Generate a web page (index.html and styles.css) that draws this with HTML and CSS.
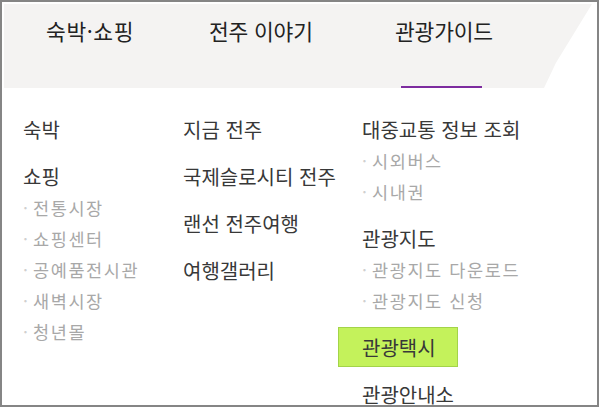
FILE: index.html
```html
<!DOCTYPE html>
<html lang="ko">
<head>
    <meta charset="UTF-8">
    <meta name="viewport" content="width=device-width, initial-scale=1.0">
    <title>관광가이드 - 전체메뉴</title>
    <link rel="stylesheet" href="styles.css">
</head>
<body>

<div class="frame">
    <!-- 상단 메뉴 -->
    <div class="gnb">
        <ul class="gnb-list">
            <li class="gnb-item first">숙박·쇼핑</li>
            <li class="gnb-item second">전주 이야기</li>
            <li class="gnb-item active">관광가이드</li>
        </ul>
    </div>

    <!-- 하위 메뉴 -->
    <div class="sub-menu">
        <ul class="dep2 col-1">
            <li><a href="#">숙박</a></li>
            <li>
                <a href="#">쇼핑</a>
                <ul class="dep3">
                    <li>전통시장</li>
                    <li>쇼핑센터</li>
                    <li>공예품전시관</li>
                    <li>새벽시장</li>
                    <li>청년몰</li>
                </ul>
            </li>
        </ul>

        <ul class="dep2 col-2">
            <li><a href="#">지금 전주</a></li>
            <li><a href="#">국제슬로시티 전주</a></li>
            <li><a href="#">랜선 전주여행</a></li>
            <li><a href="#">여행갤러리</a></li>
        </ul>

        <ul class="dep2 col-3">
            <li>
                <a href="#">대중교통 정보 조회</a>
                <ul class="dep3">
                    <li>시외버스</li>
                    <li>시내권</li>
                </ul>
            </li>
            <li>
                <a href="#">관광지도</a>
                <ul class="dep3">
                    <li>관광지도 다운로드</li>
                    <li>관광지도 신청</li>
                </ul>
            </li>
            <li><a href="#" class="highlight">관광택시</a></li>
            <li><a href="#">관광안내소</a></li>
        </ul>
    </div>
</div>

</body>
</html>
```

FILE: styles.css
```css
/* 전체 메뉴 */
body {
    margin: 0;
    padding: 0;
    background-color: #fff;
    font-family: "Noto Sans CJK KR", "Noto Sans", sans-serif;
}

ul {
    list-style: none;
    margin: 0;
    padding: 0;
}

a {
    text-decoration: none;
    color: inherit;
}

.frame {
    box-sizing: border-box;
    width: 599px;
    height: 407px;
    border: 2px solid #858585;
    padding: 2px 0 0 2px;
    overflow: hidden;
}

/* 상단 메뉴 */
.gnb {
    height: 84px;
    background-color: #f4f3f2;
    clip-path: polygon(0 0, 588px 0, 552px 70%, 540px 100%, 0 100%);
    box-sizing: border-box;
    padding: 12px 0 0 42px;
}

.gnb-list {
    display: flex;
    height: 100%;
}

.gnb-item {
    position: relative;
    font-size: 21.5px;
    line-height: 30px;
    color: #222;
    letter-spacing: -0.2px;
}

.gnb-item.first {
    width: 163px;
    letter-spacing: 0.6px;
}

.gnb-item.second {
    width: 186px;
}

.gnb-item.active::after {
    content: "";
    position: absolute;
    left: 6px;
    width: 81px;
    height: 2px;
    bottom: 0;
    background-color: #7d2c9f;
}

/* 하위 메뉴 */
.sub-menu {
    display: flex;
    padding: 26px 0 0 19px;
}

.col-1 {
    width: 160px;
}

.col-2 {
    width: 179px;
}

.dep2 > li {
    margin-bottom: 16px;
}

.dep2 > li > a {
    display: inline-block;
    font-size: 20px;
    line-height: 31px;
    color: #383838;
}

.dep3 li {
    font-size: 17.5px;
    line-height: 31px;
    letter-spacing: 1.6px;
    color: #a8a8a8;
}

.dep3 li::before {
    content: "·";
    display: inline-block;
    width: 10px;
    letter-spacing: 0;
    color: #d0d0d0;
}

.highlight {
    background-color: #c4f25b;
    border: 1px solid #a3d449;
    margin: -5px -22px -4px -24px;
    padding: 4px 21px 3px 23px;
}
```
